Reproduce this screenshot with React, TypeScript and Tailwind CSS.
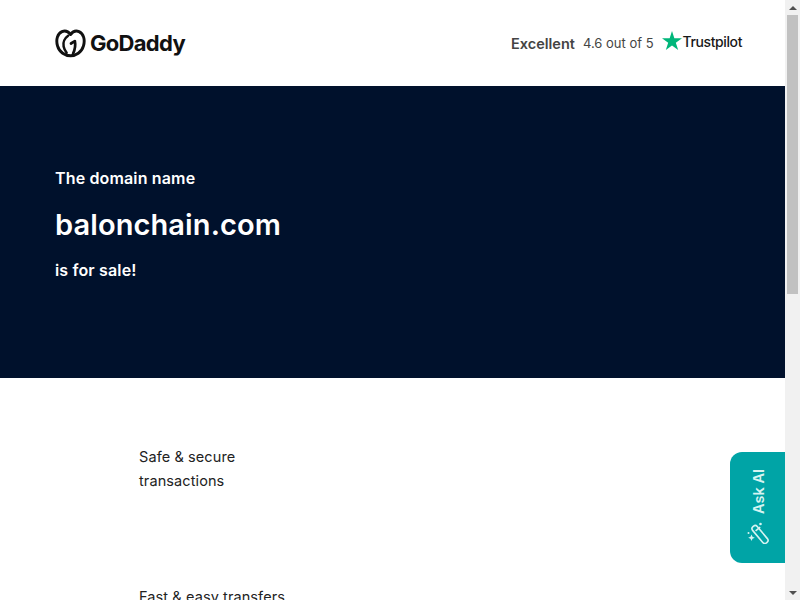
import React from 'react';

const GoDaddyHeart: React.FC = () => (
  <svg width="31" height="29" viewBox="0 0 32 29" fill="none" stroke="#111" strokeLinecap="round" strokeLinejoin="round">
    <path strokeWidth="3" d="M16 27.200c-5.400 0-11.600-3.600-13.400-10.200C.7 10.400 2.600 4.300 7.200 2.300c3-1.300 6.500-.2 8.800 3 2.300-3.200 5.800-4.300 8.800-3 4.600 2 6.500 8.100 4.600 14.700C27.600 23.600 21.400 27.200 16 27.200z" />
    <path strokeWidth="2.600" d="M13.500 6.500c-3.500 2.500-5.500 7-4.600 11 .5 2.200 1.500 4.500 3.100 6.500" />
    <path strokeWidth="2.800" d="M16.500 14.500l4-2.500c.8 3.800.2 8.500-1.800 13" />
  </svg>
);

const TrustpilotStar: React.FC = () => (
  <svg width="20" height="19" viewBox="0 0 19 18">
    <path fill="#00b67a" d="M9.500 0l2.240 6.880h7.260l-5.870 4.260 2.240 6.860-5.870-4.240-5.870 4.240 2.240-6.860L0 6.880h7.260z" />
  </svg>
);

const AskAiWand: React.FC = () => (
  <svg width="22" height="22" viewBox="0 0 22 22" fill="none" stroke="#d6f3f1" strokeWidth="1.600">
    <rect x="2.500" y="9.500" width="21" height="6" rx="2.600" transform="rotate(50 13 12.500)" />
    <path d="M8.600 8.900l4.600-3.800" />
    <path fill="#d6f3f1" stroke="none" d="M4.500 12.500l1 2.300 2.300 1-2.300 1-1 2.300-1-2.300-2.300-1 2.300-1z" />
    <circle cx="13.500" cy="2" r="1.300" fill="#d6f3f1" stroke="none" />
    <circle cx="1.500" cy="11" r="1" fill="#d6f3f1" stroke="none" />
  </svg>
);

const Scrollbar: React.FC = () => (
  <div className="w-[15px] h-full bg-[#f1f1f1] flex flex-col shrink-0">
    <div className="h-[15px] flex items-center justify-center">
      <div className="w-0 h-0 border-x-[4px] border-x-transparent border-b-[4px] border-b-[#505050]" />
    </div>
    <div className="flex-1 flex flex-col">
      <div className="h-[279px] mx-[2px] bg-[#c1c1c1]" />
    </div>
    <div className="h-[15px] flex items-center justify-center">
      <div className="w-0 h-0 border-x-[4px] border-x-transparent border-t-[4px] border-t-[#505050]" />
    </div>
  </div>
);

const App: React.FC = () => {
  return (
    <div className="w-[800px] h-[600px] overflow-hidden flex bg-white font-['Inter','Liberation_Sans',sans-serif] relative">
      <div className="w-[785px] shrink-0 h-full overflow-hidden">
        <header className="h-[86px] flex items-center justify-between pl-[55px] pr-[43px]">
          <div className="flex items-center gap-[4px]">
            <GoDaddyHeart />
            <span className="text-[22px] font-bold text-[#111] tracking-[-0.7px] leading-none">GoDaddy</span>
          </div>
          <div className="flex items-center text-[#444]">
            <span className="text-[14.500px] font-semibold mr-[8px] mt-[2px]">Excellent</span>
            <span className="text-[13px] mr-[8px] mt-[1px]">4.6 out of 5</span>
            <div className="flex items-center -mt-[6px]">
              <TrustpilotStar />
              <span className="text-[14px] font-medium text-[#191919] tracking-[-0.4px] ml-[1px] mt-[3px]">Trustpilot</span>
            </div>
          </div>
        </header>

        <section className="h-[292px] bg-[#00112c] text-white pl-[55px] flex flex-col pt-[80px]">
          <p className="text-[16px] font-semibold leading-[24px] tracking-[0.15px]">The domain name</p>
          <h1 className="text-[29px] font-semibold leading-[36px] mt-[17px] mb-[-1px] tracking-[0.1px]">balonchain.com</h1>
          <p className="text-[16px] font-semibold leading-[24px] mt-[16px] tracking-[0.15px]">is for sale!</p>
        </section>

        <section className="pl-[139px] pt-[67px] text-[#222] text-[14.500px] leading-[24px] tracking-[0.1px]">
          <p className="w-[160px]">Safe &amp; secure transactions</p>
          <p className="mt-[92px]">Fast &amp; easy transfers</p>
        </section>
      </div>

      <Scrollbar />

      <button
        type="button"
        className="absolute left-[730px] top-[452px] w-[55px] h-[111px] bg-[#00a4a6] rounded-l-[12px] flex flex-col items-center justify-center gap-[8px]"
      >
        <span className="[writing-mode:vertical-rl] rotate-180 text-[14.500px] font-semibold text-[#d6f3f1] leading-none ml-[3px] -mt-[2px]">Ask AI</span>
        <AskAiWand />
      </button>
    </div>
  );
};

export default App;
